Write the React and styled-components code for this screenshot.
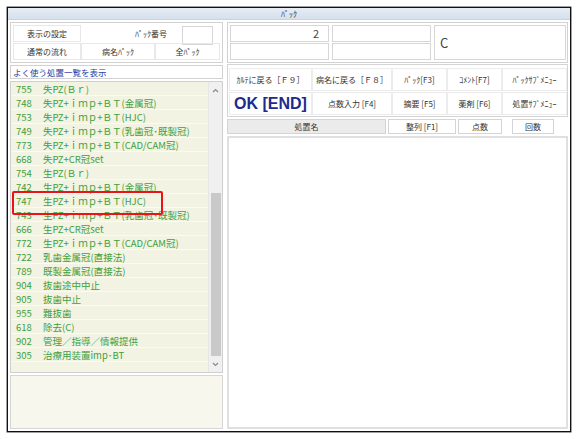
import React from "react";
import styled, { createGlobalStyle, css } from "styled-components";

const GlobalStyle = createGlobalStyle`
  html, body {
    margin: 0;
    padding: 0;
    background: #fff;
  }
  body {
    font-family: "Noto Sans CJK JP", "Noto Sans", sans-serif;
    color: #333;
  }
  * {
    box-sizing: border-box;
  }
`;

const Page = styled.div`
  width: 580px;
  height: 439px;
  padding: 7px 0 0 7px;
`;

const Window = styled.div`
  width: 564px;
  height: 425px;
  border: 1px solid #111;
  box-shadow: 0 0 0 0.5px #444;
  background: #fff;
  display: flex;
  flex-direction: column;
`;

const TitleBar = styled.div`
  height: 12px;
  background: linear-gradient(#e6edf5, #d5e0ec);
  border-bottom: 1px solid #c7d3e1;
  font-size: 8px;
  line-height: 11px;
  text-align: center;
  color: #333;
`;

const Body = styled.div`
  flex: 1;
  display: grid;
  grid-template-columns: 213px 341px;
  column-gap: 4px;
  padding: 2px;
  min-height: 0;
`;

const Column = styled.div`
  display: flex;
  flex-direction: column;
  min-height: 0;
`;

/* ---------- left header ---------- */
const HeaderPanel = styled.div`
  height: 41px;
  border: 1px solid #d2d2d2;
  background: #fff;
  padding: 2px;
  display: flex;
  flex-direction: column;
  gap: 1px;
`;

const HeaderRow = styled.div`
  display: flex;
  height: 17px;
`;

const Cell = styled.div`
  width: ${(p) => (p.w ? `${p.w}px` : "auto")};
  flex: ${(p) => (p.w ? "none" : 1)};
  border: 1px solid ${(p) => (p.plain ? "transparent" : "#e8e8e8")};
  font-size: 8px;
  line-height: 15px;
  text-align: ${(p) => p.align || "center"};
  padding-right: ${(p) => (p.align === "right" ? "12px" : 0)};
  color: #333;
  white-space: nowrap;
`;

const SmallInput = styled.div`
  width: 31px;
  height: 19px;
  margin: 1px 7px 0 2px;
  border: 1px solid #d6d6d6;
  background: #fff;
`;

/* ---------- list ---------- */
const ListTitle = styled.div`
  height: 14px;
  margin-top: 2px;
  border: 1px solid #d2d2d2;
  background: #fff;
  font-size: 8.5px;
  line-height: 12px;
  padding-left: 2px;
  color: #2b3ea3;
`;

const ListPanel = styled.div`
  height: 292px;
  margin-top: 2px;
  border: 1px solid #cfcfcf;
  background: #f4f4e5;
  display: flex;
`;

const Rows = styled.div`
  flex: 1;
  display: flex;
  flex-direction: column;
`;

const Row = styled.div`
  position: relative;
  height: 14px;
  display: flex;
  align-items: center;
  background: #f3f3e3;
  border-bottom: 1px solid #fbfbf4;
  font-size: 9.5px;
  color: #40a040;
  white-space: nowrap;

  ${(p) =>
    p.marked &&
    css`
      &::after {
        content: "";
        position: absolute;
        z-index: 2;
        left: 1px;
        top: -3px;
        width: 147px;
        height: 20px;
        border: 2px solid #e8141a;
        border-radius: 2px;
      }
    `}
`;

const Code = styled.span`
  width: 32px;
  padding-left: 5px;
`;

const Scrollbar = styled.div`
  width: 14px;
  background: #f0f0f0;
  border-left: 1px solid #e6e6e6;
  display: flex;
  flex-direction: column;
  align-items: center;
`;

const ArrowButton = styled.div`
  height: 16px;
  width: 100%;
  display: flex;
  align-items: center;
  justify-content: center;
`;

const Track = styled.div`
  flex: 1;
  width: 100%;
  display: flex;
  flex-direction: column;
  justify-content: flex-end;
  align-items: center;
`;

const Thumb = styled.div`
  width: 10px;
  height: 163px;
  background: #c9c9c9;
`;

const MemoBox = styled.div`
  flex: 1;
  margin-top: 2px;
  border: 1px solid #d6d6d6;
  background: #f7f7ee;
`;

/* ---------- right header ---------- */
const RightHeader = styled.div`
  height: 41px;
  border: 1px solid #d2d2d2;
  background: #fff;
  padding: 2px 1px 2px 2px;
  display: grid;
  grid-template-columns: 99px 99px 1fr;
  grid-template-rows: 17px 17px;
  gap: 1px 3px;
`;

const Field = styled.div`
  border: 1px solid #d6d6d6;
  background: #fff;
  font-size: ${(p) => (p.big ? "13px" : "11px")};
  line-height: 15px;
  color: #444;
  display: flex;
  align-items: center;
  justify-content: ${(p) => (p.right ? "flex-end" : "flex-start")};
  padding: 0 9px 0 5px;
  ${(p) =>
    p.big &&
    css`
      grid-row: 1 / 3;
      grid-column: 3;
    `}
`;

/* ---------- buttons ---------- */
const ButtonPanel = styled.div`
  height: 53px;
  margin-top: 1px;
  border: 1px solid #d4d4d4;
  background: #fff;
  padding: 3px 0 1px 1px;
  display: grid;
  grid-template-columns: 83px 80px 55px 55px 1fr;
  grid-template-rows: 23px 23px;
  row-gap: 1px;
`;

const Btn = styled.div`
  border: 1px solid #ececec;
  background: #fff;
  display: flex;
  align-items: center;
  justify-content: center;
  white-space: nowrap;
  font-size: 8px;
  color: #333;
  ${(p) =>
    p.primary &&
    css`
      font-family: "Liberation Sans", "Noto Sans", sans-serif;
      font-size: 16px;
      font-weight: bold;
      color: #1d2a8e;
    `}
`;

/* ---------- table header ---------- */
const ColumnHeads = styled.div`
  height: 15px;
  margin-top: 2px;
  display: flex;
`;

const Head = styled.div`
  width: ${(p) => p.w}px;
  margin-left: ${(p) => p.gap || 0}px;
  border: 1px solid #d4d4d4;
  background: ${(p) => (p.shaded ? "#ebebeb" : "#fff")};
  font-size: 8px;
  line-height: 13px;
  text-align: center;
  color: #333;
  white-space: nowrap;
`;

const Content = styled.div`
  flex: 1;
  margin-top: 2px;
  border: 2px solid #e0e0e0;
  background: #fff;
`;

const Chevron = ({ down }) => (
  <svg width="7" height="5" viewBox="0 0 7 5">
    <path
      d={down ? "M1 1 L3.5 3.5 L6 1" : "M1 4 L3.5 1.5 L6 4"}
      fill="none"
      stroke="#8a8a8a"
      strokeWidth="1.2"
    />
  </svg>
);

const items = [
  ["755", "失PZ(Ｂｒ)"],
  ["748", "失PZ+ｉｍｐ+ＢＴ(金属冠)"],
  ["753", "失PZ+ｉｍｐ+ＢＴ(HJC)"],
  ["749", "失PZ+ｉｍｐ+ＢＴ(乳歯冠･既製冠)"],
  ["773", "失PZ+ｉｍｐ+ＢＴ(CAD/CAM冠)"],
  ["668", "失PZ+CR冠set"],
  ["754", "生PZ(Ｂｒ)"],
  ["742", "生PZ+ｉｍｐ+ＢＴ(金属冠)"],
  ["747", "生PZ+ｉｍｐ+ＢＴ(HJC)", true],
  ["743", "生PZ+ｉｍｐ+ＢＴ(乳歯冠･既製冠)"],
  ["666", "生PZ+CR冠set"],
  ["772", "生PZ+ｉｍｐ+ＢＴ(CAD/CAM冠)"],
  ["722", "乳歯金属冠(直接法)"],
  ["789", "既製金属冠(直接法)"],
  ["904", "抜歯途中中止"],
  ["905", "抜歯中止"],
  ["955", "難抜歯"],
  ["618", "除去(C)"],
  ["902", "管理／指導／情報提供"],
  ["305", "治療用装置imp･BT"],
];

const buttons = [
  "ｶﾙﾃに戻る［Ｆ９］",
  "病名に戻る［Ｆ８］",
  "ﾊﾟｯｸ[F3]",
  "ｺﾒﾝﾄ[F7]",
  "ﾊﾟｯｸｻﾌﾞﾒﾆｭｰ",
  "OK [END]",
  "点数入力 [F4]",
  "摘要 [F5]",
  "薬剤 [F6]",
  "処置ｻﾌﾞﾒﾆｭｰ",
];

export default function App() {
  return (
    <>
      <GlobalStyle />
      <Page>
        <Window>
          <TitleBar>ﾊﾟｯｸ</TitleBar>
          <Body>
            <Column>
              <HeaderPanel>
                <HeaderRow>
                  <Cell w={68}>表示の設定</Cell>
                  <Cell plain align="right">
                    ﾊﾟｯｸ番号
                  </Cell>
                  <SmallInput />
                </HeaderRow>
                <HeaderRow>
                  <Cell w={68}>通常の流れ</Cell>
                  <Cell w={74}>病名ﾊﾟｯｸ</Cell>
                  <Cell>全ﾊﾟｯｸ</Cell>
                </HeaderRow>
              </HeaderPanel>
              <ListTitle>よく使う処置一覧を表示</ListTitle>
              <ListPanel>
                <Rows>
                  {items.map(([code, name, marked]) => (
                    <Row key={code} marked={marked}>
                      <Code>{code}</Code>
                      <span>{name}</span>
                    </Row>
                  ))}
                </Rows>
                <Scrollbar>
                  <ArrowButton>
                    <Chevron />
                  </ArrowButton>
                  <Track>
                    <Thumb />
                  </Track>
                  <ArrowButton>
                    <Chevron down />
                  </ArrowButton>
                </Scrollbar>
              </ListPanel>
              <MemoBox />
            </Column>
            <Column>
              <RightHeader>
                <Field right>2</Field>
                <Field />
                <Field big>C</Field>
                <Field />
                <Field />
              </RightHeader>
              <ButtonPanel>
                {buttons.map((b) => (
                  <Btn key={b} primary={b === "OK [END]"}>
                    {b}
                  </Btn>
                ))}
              </ButtonPanel>
              <ColumnHeads>
                <Head w={159} shaded>
                  処置名
                </Head>
                <Head w={68} gap={2}>
                  整列 [F1]
                </Head>
                <Head w={44} gap={2}>
                  点数
                </Head>
                <Head w={42} gap={10}>
                  回数
                </Head>
              </ColumnHeads>
              <Content />
            </Column>
          </Body>
        </Window>
      </Page>
    </>
  );
}
